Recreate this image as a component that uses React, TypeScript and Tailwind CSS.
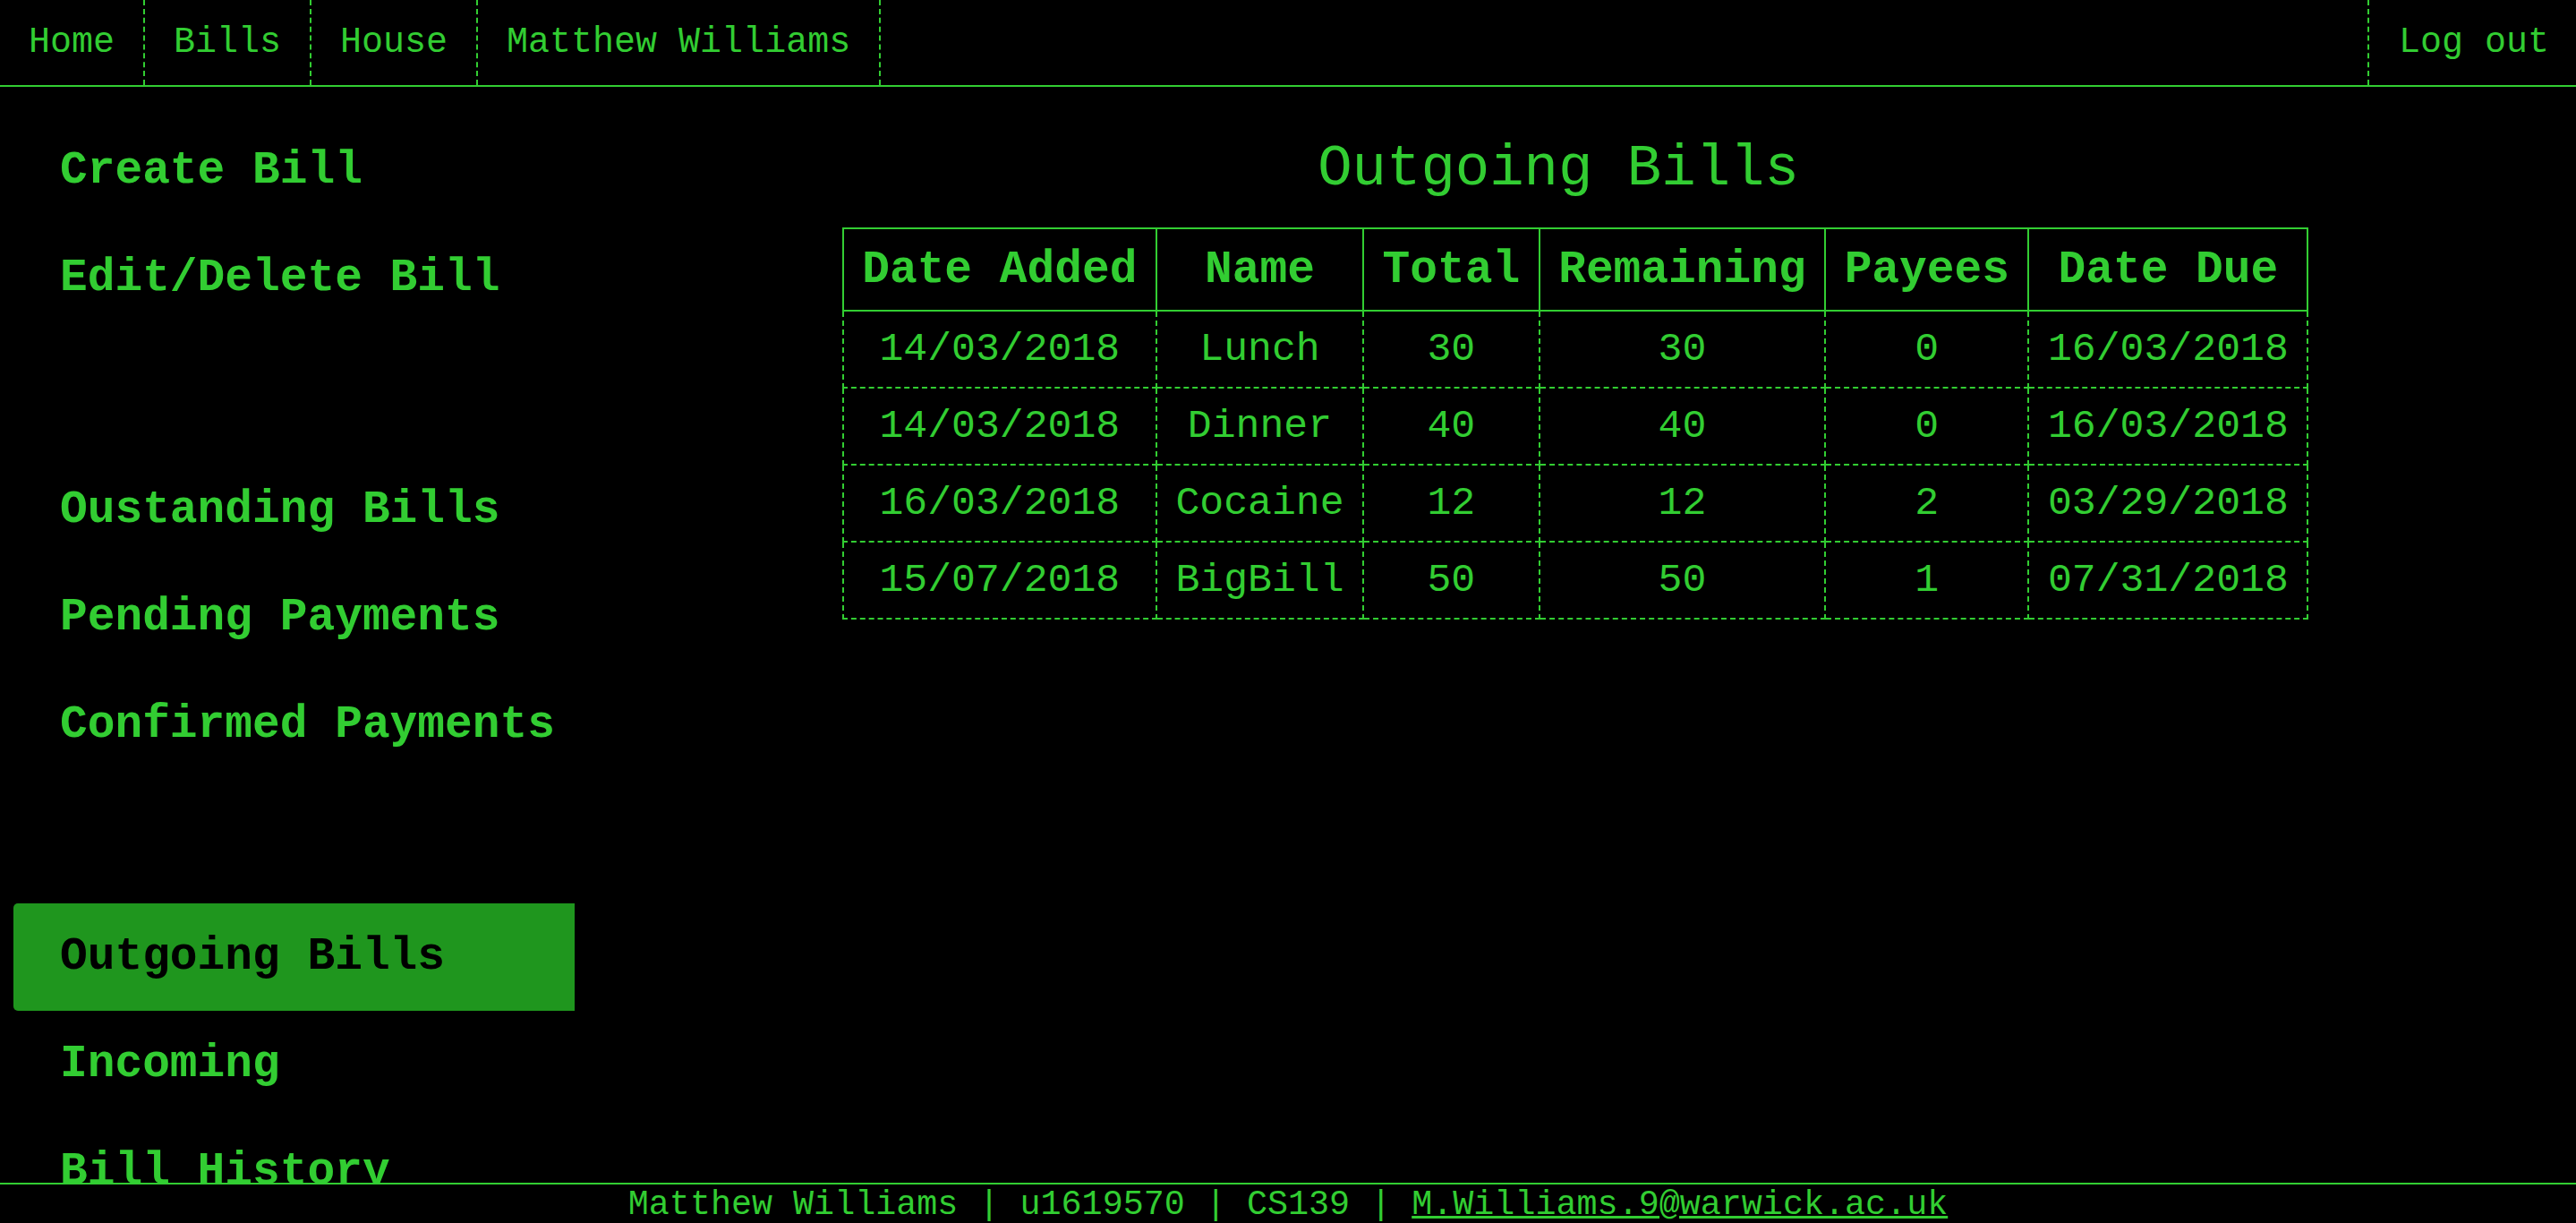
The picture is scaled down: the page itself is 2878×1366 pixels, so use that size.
import React from "react";

const navItems = ["Home", "Bills", "House", "Matthew Williams"];

const groups: string[][] = [
  ["Create Bill", "Edit/Delete Bill"],
  ["Oustanding Bills", "Pending Payments", "Confirmed Payments"],
  ["Outgoing Bills", "Incoming", "Bill History"],
];

const headers = ["Date Added", "Name", "Total", "Remaining", "Payees", "Date Due"];

const rows = [
  ["14/03/2018", "Lunch", "30", "30", "0", "16/03/2018"],
  ["14/03/2018", "Dinner", "40", "40", "0", "16/03/2018"],
  ["16/03/2018", "Cocaine", "12", "12", "2", "03/29/2018"],
  ["15/07/2018", "BigBill", "50", "50", "1", "07/31/2018"],
];

export default function App() {
  return (
    <div className="h-[1366px] w-full bg-black flex flex-col overflow-hidden font-['Courier_New','Liberation_Mono',monospace] text-[#32cd32]">
      <nav className="flex h-[97px] shrink-0 border-b-2 border-[#32cd32]">
        {navItems.map((n) => (
          <a
            key={n}
            className="flex items-center px-[32px] border-r-2 border-dashed border-[#32cd32] text-[40px] leading-none whitespace-pre"
          >
            {n}
          </a>
        ))}
        <div className="flex-1" />
        <a className="flex items-center pl-[33px] pr-[30px] border-l-2 border-dashed border-[#32cd32] text-[40px] leading-none whitespace-pre">
          Log out
        </a>
      </nav>

      <div className="flex flex-1 min-h-0 overflow-hidden">
        <aside className="w-[642px] shrink-0 pt-[34px] flex flex-col gap-[139px]">
          {groups.map((g, gi) => (
            <div key={gi} className="flex flex-col">
              {g.map((item) => {
                const active = item === "Outgoing Bills";
                return (
                  <a
                    key={item}
                    className={
                      active
                        ? "ml-[15px] w-[627px] h-[120px] shrink-0 flex items-center pl-[52px] rounded-l-[5px] bg-[#1f961e] text-black font-bold text-[51.2px] leading-none whitespace-pre"
                        : "ml-[15px] w-[627px] h-[120px] shrink-0 flex items-center pl-[52px] font-bold text-[51.2px] leading-none whitespace-pre"
                    }
                  >
                    {item}
                  </a>
                );
              })}
            </div>
          ))}
        </aside>

        <main className="flex-1 flex flex-col items-center pt-[56px]">
          <h1 className="text-[64px] leading-[72px] font-normal pr-[38px] whitespace-pre">Outgoing Bills</h1>
          <table className="mt-[29px] border-collapse">
            <thead>
              <tr>
                {headers.map((h) => (
                  <th
                    key={h}
                    className="border-2 border-solid border-[#32cd32] px-[20.5px] py-[16px] text-[51.2px] leading-[58px] font-bold text-center whitespace-pre"
                  >
                    {h}
                  </th>
                ))}
              </tr>
            </thead>
            <tbody>
              {rows.map((r, ri) => (
                <tr key={ri}>
                  {r.map((c, ci) => (
                    <td
                      key={ci}
                      className="border-2 border-dashed border-[#32cd32] px-[20.5px] py-[16px] text-[44.8px] leading-[52px] text-center whitespace-pre"
                    >
                      {c}
                    </td>
                  ))}
                </tr>
              ))}
            </tbody>
          </table>
        </main>
      </div>

      <footer className="h-[45px] shrink-0 border-t-2 border-[#32cd32] bg-black flex items-center justify-center pt-[3px] text-[38.4px] leading-none whitespace-pre">
        <span>
          Matthew Williams | u1619570 | CS139 | <a className="underline">M.Williams.9@warwick.ac.uk</a>
        </span>
      </footer>
    </div>
  );
}
